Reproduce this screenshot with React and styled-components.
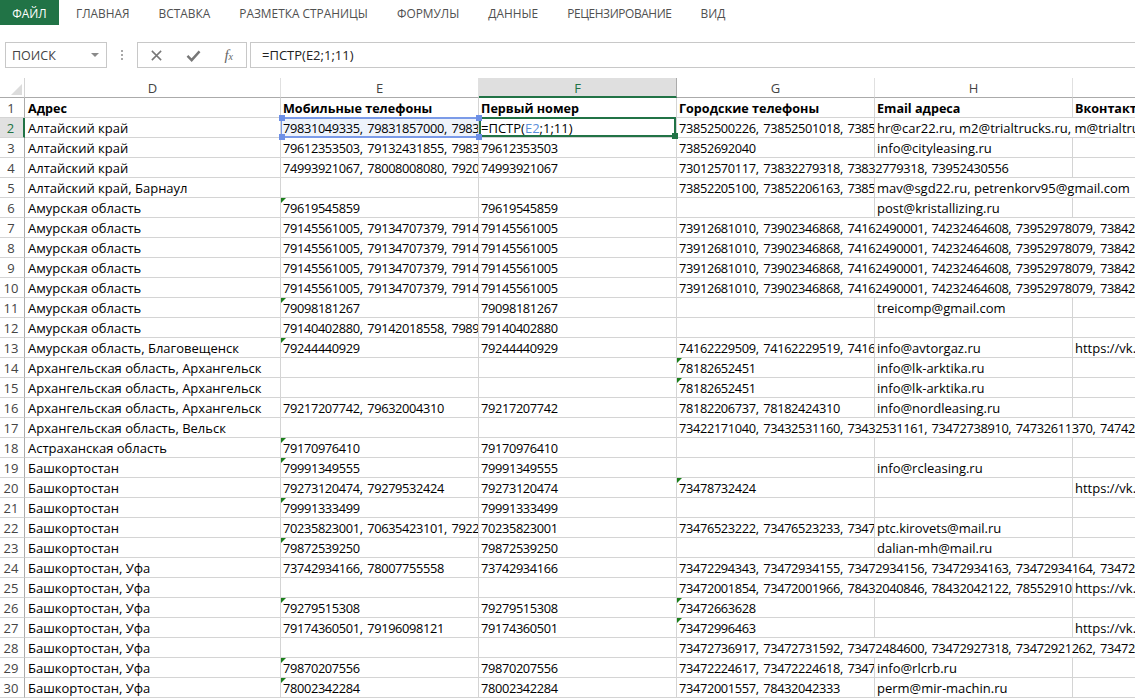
import React from 'react'
import styled, { createGlobalStyle } from 'styled-components'

const GlobalStyle = createGlobalStyle`
  html, body {
    margin: 0;
    padding: 0;
    background: #fff;
    overflow: hidden;
  }
  body {
    width: 1135px;
    height: 698px;
    font-family: "Open Sans", "Noto Sans", sans-serif;
  }
`

const TABS = ['ГЛАВНАЯ', 'ВСТАВКА', 'РАЗМЕТКА СТРАНИЦЫ', 'ФОРМУЛЫ', 'ДАННЫЕ', 'РЕЦЕНЗИРОВАНИЕ', 'ВИД']
const COLUMNS = ['D', 'E', 'F', 'G', 'H']
const WIDTHS = [256, 198, 198, 198, 198, 198]

const ALT = 'Алтайский край'
const AMUR = 'Амурская область'
const ARH = 'Архангельская область, Архангельск'
const BASH = 'Башкортостан'
const UFA = 'Башкортостан, Уфа'
const G_LONG = '73912681010, 73902346868, 74162490001, 74232464608, 73952978079, 73842345678'
const E_LONG = '79145561005, 79134707379, 79145561006'
const VK = 'https://vk.com/club'

// d, e, f, g, h, i  + индексы ячеек с зелёным уголком
const ROWS = [
  [ALT, '79831049335, 79831857000, 79831857001', '=ПСТР(E2;1;11)', '73852500226, 73852501018, 73852501019', 'hr@car22.ru, m2@trialtrucks.ru, m@trialtrucks.ru', ''],
  [ALT, '79612353503, 79132431855, 79831857001', '79612353503', '73852692040', 'info@cityleasing.ru', ''],
  [ALT, '74993921067, 78008008080, 79201234567', '74993921067', '73012570117, 73832279318, 73832779318, 73952430556', '', ''],
  ['Алтайский край, Барнаул', '', '', '73852205100, 73852206163, 73852206164', 'mav@sgd22.ru, petrenkorv95@gmail.com', ''],
  [AMUR, '79619545859', '79619545859', '', 'post@kristallizing.ru', '', [1]],
  [AMUR, E_LONG, '79145561005', G_LONG, '', ''],
  [AMUR, E_LONG, '79145561005', G_LONG, '', ''],
  [AMUR, E_LONG, '79145561005', G_LONG, '', ''],
  [AMUR, E_LONG, '79145561005', G_LONG, '', ''],
  [AMUR, '79098181267', '79098181267', '', 'treicomp@gmail.com', '', [1]],
  [AMUR, '79140402880, 79142018558, 79890001122', '79140402880', '', '', ''],
  ['Амурская область, Благовещенск', '79244440929', '79244440929', '74162229509, 74162229519, 74162229520', 'info@avtorgaz.ru', VK, [1]],
  [ARH, '', '', '78182652451', 'info@lk-arktika.ru', '', [3]],
  [ARH, '', '', '78182652451', 'info@lk-arktika.ru', '', [3]],
  [ARH, '79217207742, 79632004310', '79217207742', '78182206737, 78182424310', 'info@nordleasing.ru', ''],
  ['Архангельская область, Вельск', '', '', '73422171040, 73432531160, 73432531161, 73472738910, 74732611370, 74742345678', '', ''],
  ['Астраханская область', '79170976410', '79170976410', '', '', '', [1]],
  [BASH, '79991349555', '79991349555', '', 'info@rcleasing.ru', '', [1]],
  [BASH, '79273120474, 79279532424', '79273120474', '73478732424', '', VK, [3]],
  [BASH, '79991333499', '79991333499', '', '', '', [1]],
  [BASH, '70235823001, 70635423101, 79221234567', '70235823001', '73476523222, 73476523233, 73476523234', 'ptc.kirovets@mail.ru', ''],
  [BASH, '79872539250', '79872539250', '', 'dalian-mh@mail.ru', '', [1]],
  [UFA, '73742934166, 78007755558', '73742934166', '73472294343, 73472934155, 73472934156, 73472934163, 73472934164, 73472934165', '', ''],
  [UFA, '', '', '73472001854, 73472001966, 78432040846, 78432042122, 78552910123', '', VK],
  [UFA, '79279515308', '79279515308', '73472663628', '', '', [1, 3]],
  [UFA, '79174360501, 79196098121', '79174360501', '73472996463', '', VK, [3]],
  [UFA, '', '', '73472736917, 73472731592, 73472484600, 73472927318, 73472921262, 73472412345', '', ''],
  [UFA, '79870207556', '79870207556', '73472224617, 73472224618, 73472224619', 'info@rlcrb.ru', '', [1]],
  [UFA, '78002342284', '78002342284', '73472001557, 78432042333', 'perm@mir-machin.ru', '', [1]],
]

const HEADERS = ['Адрес', 'Мобильные телефоны', 'Первый номер', 'Городские телефоны', 'Email адреса', 'Вконтакте']

// сколько колонок занимает текст, который вылезает на пустые соседние ячейки
function buildCells(values) {
  const cells = []
  let i = 0
  while (i < 6) {
    let free = 1
    while (i + free < 6 && !values[i + free]) free++
    let need = 1
    let room = WIDTHS[i]
    const textWidth = values[i].length * 6.6
    while (room < textWidth && need < free) {
      room += WIDTHS[i + need]
      need++
    }
    cells.push({ col: i, span: need, text: values[i] })
    i += need
  }
  return cells
}

function Sheet() {
  return (
    <Grid>
      <SheetRow>
        <Corner><CornerMark /></Corner>
        {COLUMNS.map((c) => (
          <ColHead key={c} $active={c === 'F'}>{c}</ColHead>
        ))}
        <ColHead />
      </SheetRow>
      <SheetRow>
        <RowHead>1</RowHead>
        {HEADERS.map((h, i) => (
          <Cell key={h}><CellText $bold $first={i === 0}>{h}</CellText></Cell>
        ))}
      </SheetRow>
      {ROWS.map((row, r) => {
        const num = r + 2
        const marks = row[6] || []
        return (
          <SheetRow key={num}>
            <RowHead $active={num === 2}>{num}</RowHead>
            {buildCells(row.slice(0, 6)).map(({ col, span, text }) => {
              const isDigits = /^[\d, ]+$/.test(text)
              if (num === 2 && col === 1) {
                return (
                  <Cell key={col} $tint>
                    <CellText $digits>{text}</CellText>
                    <RangeFrame>
                      <Handle $x="left" $y="top" />
                      <Handle $x="right" $y="top" />
                      <Handle $x="left" $y="bottom" />
                      <Handle $x="right" $y="bottom" />
                    </RangeFrame>
                  </Cell>
                )
              }
              if (num === 2 && col === 2) {
                return (
                  <Cell key={col}>
                    <CellText>=ПСТР(<FormulaRef>E2</FormulaRef>;1;11)</CellText>
                    <ActiveFrame><FillHandle /></ActiveFrame>
                  </Cell>
                )
              }
              return (
                <Cell key={col} $span={span}>
                  {marks.includes(col) && <Mark />}
                  <CellText $digits={isDigits} $first={col === 0}>{text}</CellText>
                </Cell>
              )
            })}
          </SheetRow>
        )
      })}
    </Grid>
  )
}

function App() {
  return (
    <>
      <GlobalStyle />
      <Page>
        <Tabs>
          <FileTab>ФАЙЛ</FileTab>
          {TABS.map((t) => <Tab key={t} $tight={t === 'РЕЦЕНЗИРОВАНИЕ'}>{t}</Tab>)}
        </Tabs>
        <FormulaBar>
          <NameBox>
            ПОИСК
            <Caret />
          </NameBox>
          <Dots><i /><i /><i /></Dots>
          <ActionBox>
            <svg width="13" height="13" viewBox="0 0 14 14">
              <path d="M2 2 L12 12 M12 2 L2 12" stroke="#777" strokeWidth="1.6" fill="none" />
            </svg>
            <svg width="15" height="13" viewBox="0 0 16 14">
              <path d="M1.5 7.5 L6 12 L14.5 2.5" stroke="#777" strokeWidth="2.6" fill="none" />
            </svg>
            <FxLabel>f<small>x</small></FxLabel>
          </ActionBox>
          <FormulaInput>=ПСТР(E2;1;11)</FormulaInput>
        </FormulaBar>
        <Sheet />
      </Page>
    </>
  )
}

export default App

const Page = styled.div`
  width: 1135px;
  height: 698px;
  overflow: hidden;
  color: #000;
`

const Tabs = styled.div`
  display: flex;
  align-items: center;
  gap: 29px;
  height: 25px;
  font-size: 11.9px;
  color: #505050;
`

const FileTab = styled.div`
  width: 59px;
  height: 25px;
  margin-right: -12px;
  display: flex;
  align-items: center;
  justify-content: center;
  background: #217346;
  color: #fff;
`

const Tab = styled.div`
  white-space: nowrap;
  letter-spacing: ${(p) => (p.$tight ? '-0.4px' : '0')};
`

const FormulaBar = styled.div`
  display: flex;
  height: 26px;
  margin-top: 17px;
  padding-left: 5px;
`

const NameBox = styled.div`
  position: relative;
  box-sizing: border-box;
  width: 102px;
  border: 1px solid #c8c8c8;
  padding-left: 6px;
  font-size: 12.5px;
  line-height: 25px;
  color: #444;
`

const Caret = styled.span`
  position: absolute;
  right: 7px;
  top: 10px;
  border-left: 4px solid transparent;
  border-right: 4px solid transparent;
  border-top: 4px solid #8a8a8a;
`

const Dots = styled.div`
  width: 30px;
  display: flex;
  flex-direction: column;
  align-items: center;
  justify-content: center;
  gap: 2px;

  i {
    width: 2px;
    height: 2px;
    background: #a8a8a8;
  }
`

const ActionBox = styled.div`
  box-sizing: border-box;
  width: 110px;
  border: 1px solid #c8c8c8;
  display: flex;
  align-items: center;
  justify-content: space-between;
  padding: 0 13px 0 12px;
`

const FxLabel = styled.span`
  font-family: "Liberation Serif", serif;
  font-style: italic;
  font-size: 15px;
  color: #666;

  small {
    font-size: 10px;
  }
`

const FormulaInput = styled.div`
  flex: 1;
  margin-left: 3px;
  border: 1px solid #c8c8c8;
  border-right: none;
  padding-left: 11px;
  font-size: 13px;
  line-height: 25px;
  color: #222;
`

const Grid = styled.div`
  margin-top: 10px;
  display: flex;
  flex-direction: column;
`

const SheetRow = styled.div`
  display: grid;
  grid-template-columns: 25px ${WIDTHS.map((w) => w + 'px').join(' ')};
  grid-template-rows: 20px;
  height: 20px;
`

const Corner = styled.div`
  position: relative;
  box-sizing: border-box;
  border-right: 1px solid #d4d4d4;
  border-bottom: 1px solid #ababab;
`

const CornerMark = styled.span`
  position: absolute;
  right: 2px;
  bottom: 2px;
  border-left: 11px solid transparent;
  border-bottom: 11px solid #dcdcdc;
`

const ColHead = styled.div`
  box-sizing: border-box;
  text-align: center;
  font-size: 13px;
  line-height: 21px;
  color: ${(p) => (p.$active ? '#217346' : '#444')};
  background: ${(p) => (p.$active ? '#dfdfdf' : '#fff')};
  border-right: 1px solid ${(p) => (p.$active ? '#ababab' : '#e0e0e0')};
  border-bottom: ${(p) => (p.$active ? '2px solid #217346' : '1px solid #ababab')};
`

const RowHead = styled.div`
  box-sizing: border-box;
  text-align: center;
  font-size: 13px;
  line-height: 20px;
  padding-right: 2px;
  color: ${(p) => (p.$active ? '#217346' : '#444')};
  background: ${(p) => (p.$active ? '#e1e1e1' : '#fff')};
  border-right: ${(p) => (p.$active ? '2px solid #217346' : '1px solid #ababab')};
  border-bottom: 1px solid #d4d4d4;
`

const Cell = styled.div`
  position: relative;
  box-sizing: border-box;
  grid-column: span ${(p) => p.$span || 1};
  min-width: 0;
  background: ${(p) => (p.$tint ? '#eef3fb' : '#fff')};
  border-right: 1px solid #d4d4d4;
  border-bottom: 1px solid #d4d4d4;
`

const CellText = styled.div`
  overflow: hidden;
  white-space: nowrap;
  padding-left: ${(p) => (p.$first ? '3px' : '2px')};
  height: 19px;
  font-size: ${(p) => (p.$digits ? '12.8px' : p.$bold ? '12.6px' : '13px')};
  letter-spacing: ${(p) => (p.$digits ? '-0.34px' : '0')};
  word-spacing: ${(p) => (p.$digits ? '1.5px' : '0')};
  font-weight: ${(p) => (p.$bold ? 700 : 400)};
  line-height: 21px;
`

const Mark = styled.span`
  position: absolute;
  left: 0;
  top: 0;
  border-top: 5px solid #1a7f1a;
  border-right: 5px solid transparent;
`

const FormulaRef = styled.span`
  color: #5b8fd9;
`

const RangeFrame = styled.span`
  position: absolute;
  z-index: 4;
  inset: -1px -1px -1px 0;
  border-top: 2px solid #7b9be8;
  border-bottom: 2px solid #7b9be8;
  border-left: 1px solid #7b9be8;
`

const Handle = styled.span`
  position: absolute;
  width: 6px;
  height: 6px;
  background: #6c8fe6;
  ${(p) => p.$x}: -3px;
  ${(p) => p.$y}: -4px;
`

const ActiveFrame = styled.span`
  position: absolute;
  z-index: 3;
  inset: -1px 0 0 0;
  border: 2px solid #217346;
`

const FillHandle = styled.span`
  position: absolute;
  right: -4px;
  bottom: -4px;
  width: 6px;
  height: 6px;
  background: #217346;
`
